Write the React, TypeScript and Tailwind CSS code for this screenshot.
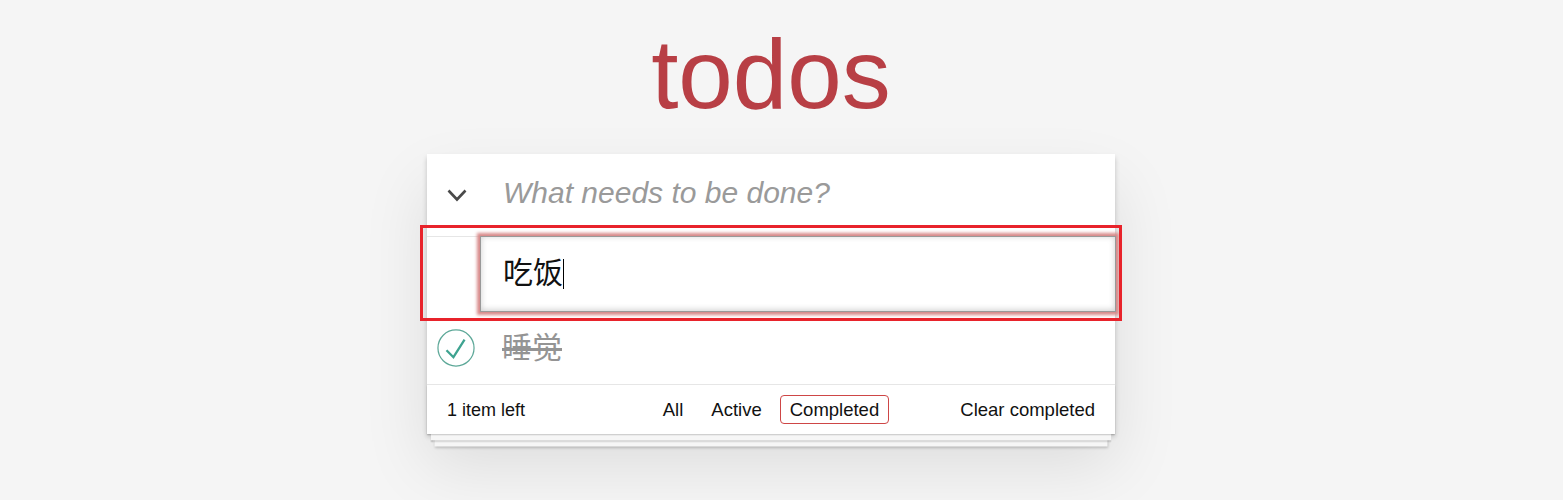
import React from "react";

const FONT = "font-['Liberation_Sans','Noto_Sans_CJK_SC',Arial,sans-serif]";

function ToggleAll() {
  return (
    <svg width="20" height="13" viewBox="0 0 20 13" className="shrink-0">
      <polyline points="1.5,1.5 10,10.5 18.5,1.5" fill="none" stroke="#4a4a4a" strokeWidth="2.6" />
    </svg>
  );
}

function DoneCheck() {
  return (
    <svg width="38" height="38" viewBox="0 0 40 40" className="shrink-0">
      <circle cx="20" cy="20" r="19" fill="none" stroke="#5da898" strokeWidth="1.3" />
      <polyline points="10,22.3 17.3,29.7 29,11.3" fill="none" stroke="#3ea390" strokeWidth="2.4" />
    </svg>
  );
}

export default function App() {
  const filters = ["All", "Active", "Completed"];
  const selected = "Completed";

  return (
    <div className={`relative min-h-[500px] bg-[#f5f5f5] text-[#111] ${FONT}`}>
      <div className="w-[1542px] flex flex-col items-center pt-[25px]">
        <h1 className="text-[98px] leading-[98px] text-[#b83f45] mb-[31px]">todos</h1>

        <section className="w-[688px] bg-white shadow-[0_2.5px_5px_0_rgba(0,0,0,0.2),0_31px_62px_0_rgba(0,0,0,0.1)]">
          {/* new todo */}
          <header className="h-[82px] flex items-center pl-[20px]">
            <ToggleAll />
            <input
              placeholder="What needs to be done?"
              className="ml-[36px] flex-1 bg-transparent outline-none text-[30px] leading-[42px] pb-[5px] placeholder:italic placeholder:text-[#9a9a9a]"
            />
          </header>

          <ul className="border-t border-[#e6e6e6]">
            {/* editing item */}
            <li className="h-[75px]">
              <div className="-mt-px ml-[53px] w-[636px] h-[76px] flex items-center pl-[22px] border border-[#999] text-[30px] text-[#111] shadow-[inset_0_-1px_6px_0_rgba(0,0,0,0.2),0_0_3px_3px_#d88a8a]">
                <span className="pb-[3px]">吃饭</span>
                <span className="w-px h-[30px] bg-black" />
              </div>
            </li>
            {/* completed item */}
            <li className="h-[73px] flex items-center pl-[10px] gap-[27px]">
              <DoneCheck />
              <span className="text-[30px] text-[#949494] line-through">睡觉</span>
            </li>
          </ul>

          <footer className="relative h-[50px] border-t border-[#e6e6e6] px-5 grid grid-cols-[1fr_auto_1fr] items-center">
            <div className="absolute inset-0 pointer-events-none shadow-[0_1.25px_1.25px_rgba(0,0,0,0.2),0_10px_0_-3.75px_#f6f6f6,0_11.25px_1.25px_-3.75px_rgba(0,0,0,0.2),0_20px_0_-7.5px_#f6f6f6,0_21.25px_2.5px_-7.5px_rgba(0,0,0,0.2)]" />
            <span className="relative justify-self-start text-[18px] leading-[20px]">1 item left</span>
            <ul className="relative flex gap-2">
              {filters.map((f) => (
                <li key={f}>
                  <a
                    className={
                      f === selected
                        ? "block px-[9px] py-[3.5px] text-[18.5px] leading-[20px] rounded-[4px] border border-[#ce4646]"
                        : "block px-[9px] py-[3.5px] text-[18.5px] leading-[20px] rounded-[4px] border border-transparent"
                    }
                  >
                    {f}
                  </a>
                </li>
              ))}
            </ul>
            <span className="relative justify-self-end text-[18.5px] leading-[20px]">Clear completed</span>
          </footer>
        </section>
      </div>

      {/* annotation frame */}
      <div className="absolute left-[420px] top-[225px] w-[702px] h-[96px] border-[3px] border-[#e8232b]" />
    </div>
  );
}
